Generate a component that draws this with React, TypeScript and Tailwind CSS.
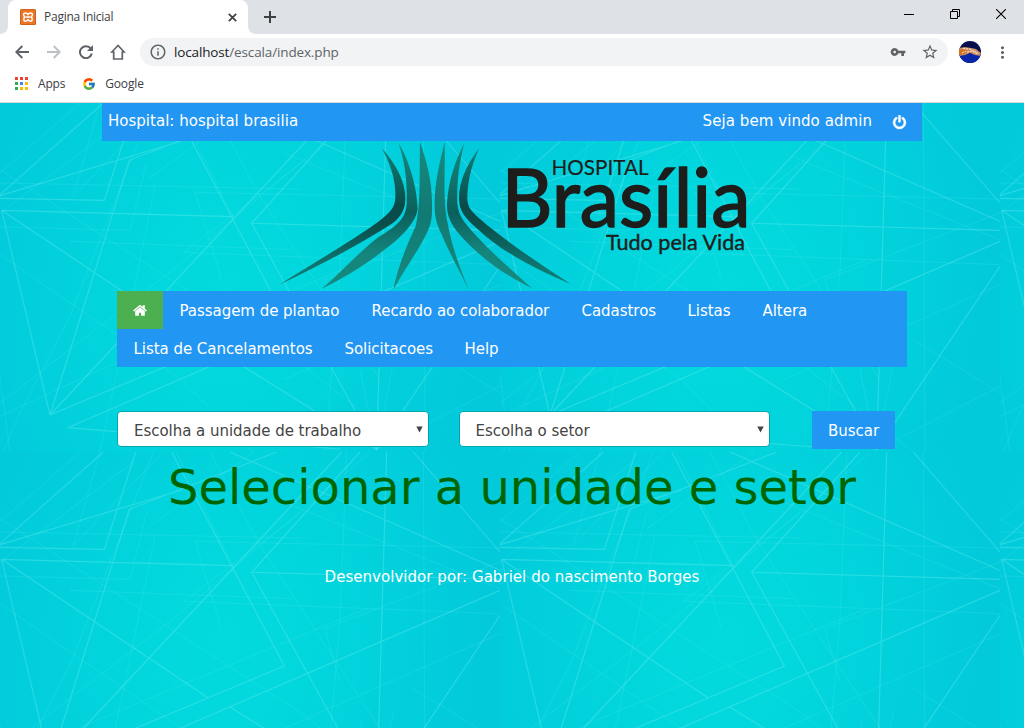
import React from "react";
import { MdInfoOutline, MdVpnKey, MdStarBorder, MdMoreVert } from "react-icons/md";
import { FcGoogle } from "react-icons/fc";

const strongLines = [
  "M310 0L0 275",
  "M407 0L313 292L0 286",
  "M830 0L388 172L150 936",
  "M515 0L853 642L150 936",
  "M1500 415L203 974L350 986L1020 1038",
  "M5 322L700 341",
  "M150 936L5 322L625 738",
  "M1025 0L150 936",
  "M1080 0L755 361L1500 382",
  "M755 361L1130 1040L1500 490",
  "M690 0L1500 355",
  "M1240 0L1500 300",
  "M1160 0L1130 1040L690 765",
  "M545 114L0 278",
];

const faintLines = [
  "M0 240L900 258",
  "M665 530L585 268L1500 288",
  "M550 448L880 200L1110 0",
  "M550 448L1500 485",
  "M210 415L880 440",
  "M0 372L390 382L440 180",
  "M0 455L540 826L760 1047",
  "M0 200L900 780L1240 1047",
  "M630 0L780 280L1140 830",
  "M528 0L700 341",
  "M460 0L210 640L60 930L10 1047",
  "M490 0L220 280L300 0",
  "M465 250L390 620L300 1047",
  "M1270 0L1275 1047",
  "M1040 0L1020 500L975 1047",
  "M1020 690L975 530L1500 330",
  "M1500 545L850 830",
  "M1100 470L300 800L0 940",
  "M0 210L240 0",
  "M400 30L0 330",
  "M850 150L1500 410",
  "M760 0L440 230",
  "M0 820L30 1047",
  "M1130 1040L1180 780",
  "M1130 1040L1500 850",
  "M1130 1040L1080 800",
  "M1500 870L1240 710",
  "M0 900L520 500L900 180",
];

function Backdrop() {
  return (
    <svg className="absolute inset-0 h-full w-full" aria-hidden="true">
      <defs>
        <radialGradient id="glow" gradientUnits="userSpaceOnUse" cx="0" cy="0" r="1" gradientTransform="translate(225 190) rotate(10) scale(255 340)">
          <stop offset="0" stopColor="#02dadd" />
          <stop offset="0.3" stopColor="#02d7dd" />
          <stop offset="0.7" stopColor="#02d0dc" />
          <stop offset="1" stopColor="#02cadb" />
        </radialGradient>
        <pattern id="mesh" width="500" height="349" patternUnits="userSpaceOnUse">
          <rect width="500" height="349" fill="url(#glow)" />
          <g transform="scale(0.33333)" fill="none" stroke="#7ff3f3">
            <path d={strongLines.join("")} strokeWidth="3.4" strokeOpacity="0.3" />
            <path d={faintLines.join("")} strokeWidth="3" strokeOpacity="0.12" />
          </g>
        </pattern>
      </defs>
      <rect width="100%" height="100%" fill="url(#mesh)" />
    </svg>
  );
}

function Logo() {
  return (
    <svg className="block h-[150px] w-full overflow-visible" viewBox="102 141 820 150" role="img" aria-label="Hospital Brasília">
      <defs>
        <linearGradient id="outer" x1="0" y1="0" x2="0" y2="1">
          <stop offset="0" stopColor="#128078" />
          <stop offset="0.42" stopColor="#0a4b49" />
          <stop offset="0.55" stopColor="#0a4d4a" />
          <stop offset="0.8" stopColor="#0d6f69" />
          <stop offset="1" stopColor="#128078" />
        </linearGradient>
        <linearGradient id="middle" x1="0" y1="0" x2="0" y2="1">
          <stop offset="0" stopColor="#158a80" />
          <stop offset="0.48" stopColor="#0b5f5b" />
          <stop offset="0.75" stopColor="#14857c" />
          <stop offset="1" stopColor="#158a80" />
        </linearGradient>
        <linearGradient id="inner" x1="0" y1="0" x2="0" y2="1">
          <stop offset="0" stopColor="#168a80" />
          <stop offset="0.5" stopColor="#117a73" />
          <stop offset="1" stopColor="#178b81" />
        </linearGradient>
      </defs>
      <g transform="translate(270 138) scale(0.33333)">
        <path fill="url(#outer)" d="M335 30C375 75 408 130 406 185C405 222 385 246 355 264C260 324 145 385 28 440C130 375 235 316 325 251C360 224 375 210 376 178C378 125 362 80 335 30Z" />
        <path fill="url(#middle)" d="M385 15C415 60 441 145 443 212C441 240 415 274 382 304C322 356 240 412 155 452C215 402 260 348 325 298C385 261 408 240 410 195C412 130 405 70 385 15Z" />
        <path fill="url(#inner)" d="M450 12C470 70 487 130 486 205C487 250 480 270 460 305C430 360 400 400 370 455C385 380 412 320 437 265C453 200 448 100 450 12Z" />
        <path fill="url(#inner)" d="M524 12C526 100 518 195 533 255C546 330 572 395 596 455C570 400 545 360 513 285C495 250 493 220 494 190C495 130 510 70 524 12Z" />
        <path fill="url(#middle)" d="M583 15C566 80 560 140 562 195C565 240 590 260 620 295C670 350 730 400 785 450C700 410 620 350 565 285C540 255 530 230 531 195C535 130 555 70 583 15Z" />
        <path fill="url(#outer)" d="M628 30C600 90 592 140 592 185C595 218 615 228 650 260C730 325 820 385 902 438C800 395 700 345 625 275C585 240 567 220 567 180C567 130 590 80 628 30Z" />
      </g>
      <g fill="#1d1d1b" stroke="#1d1d1b" fontFamily="Lato, 'Noto Sans', sans-serif">
        <text x="551.500" y="174.500" fontSize="21.500" strokeWidth="0.200" textLength="97" lengthAdjust="spacingAndGlyphs">HOSPITAL</text>
        <text x="501.500" y="227" fontSize="82" strokeWidth="1.600" textLength="249" lengthAdjust="spacingAndGlyphs">Brasília</text>
        <text x="606" y="250" fontSize="21.500" strokeWidth="0.400" textLength="139" lengthAdjust="spacingAndGlyphs">Tudo pela Vida</text>
      </g>
    </svg>
  );
}

function TabStrip() {
  return (
    <div className="flex h-[34px] bg-[#dee1e6]">
      <div className="flex w-2 bg-white">
        <div className="w-2 rounded-br-lg bg-[#dee1e6]" />
      </div>
      <div className="flex w-60 items-center rounded-t-lg bg-white pl-3 pr-[10px]">
        <svg className="h-4 w-4" viewBox="0 0 16 16">
          <rect width="16" height="16" rx="1.5" fill="#ec7625" />
          <rect x=".5" y=".5" width="15" height="15" rx="1" fill="none" stroke="#d0611a" />
          <path d="M8 5.500C6.500 3.200 3.500 3.500 3.500 5.500C3.500 7 4.500 7.500 5 8C3.500 8.500 3.200 12 5.200 12.300C7 12.500 7.500 11 8 10.500C8.500 11 9 12.500 10.800 12.300C12.800 12 12.500 8.500 11 8C11.500 7.500 12.500 7 12.500 5.500C12.500 3.500 9.500 3.200 8 5.500ZM6 8h4" fill="none" stroke="#fff" strokeWidth="1.500" />
        </svg>
        <span className="ml-2 flex-1 font-['Open_Sans',sans-serif] text-[12px] tracking-[-0.25px] text-[#3c4043]">Pagina Inicial</span>
        <svg className="mr-[1px] h-[9px] w-[9px]" viewBox="0 0 9 9"><path d="M.8.800l7.400 7.400M8.200.8L.8 8.200" stroke="#3c4043" strokeWidth="1.700" /></svg>
      </div>
      <div className="flex w-2 bg-white">
        <div className="w-2 rounded-bl-lg bg-[#dee1e6]" />
      </div>
      <svg className="ml-2 mt-[11px] h-3 w-3" viewBox="0 0 12 12"><path d="M6 0v12M0 6h12" stroke="#3c4043" strokeWidth="2" /></svg>
      <div className="ml-auto flex items-start gap-9 pr-[18px] pt-[9px]">
        <svg className="h-[11px] w-[10px]" viewBox="0 0 10 11"><path d="M0 5.500h10" stroke="#000" /></svg>
        <svg className="h-[10px] w-[10px]" viewBox="0 0 10 10"><path d="M.5 2.500h7v7h-7zM2.500 2.500v-2h7v7h-2" fill="none" stroke="#000" /></svg>
        <svg className="h-[10px] w-[10px]" viewBox="0 0 10 10"><path d="M0 0l10 10M10 0L0 10" stroke="#000" strokeWidth="1.100" /></svg>
      </div>
    </div>
  );
}

function Toolbar() {
  return (
    <div className="flex h-9 items-center bg-white pl-[15px] pr-[11px] text-[#5f6368]">
      <svg className="h-[14px] w-[14px]" viewBox="0 0 14 14"><path d="M14 7H1.500M7.300 1L1.300 7l6 6" fill="none" stroke="currentColor" strokeWidth="1.900" /></svg>
      <svg className="ml-[18px] h-[14px] w-[14px] text-[#bdc1c6]" viewBox="0 0 14 14"><path d="M0 7h12.500M6.700 1l6 6-6 6" fill="none" stroke="currentColor" strokeWidth="1.900" /></svg>
      <svg className="ml-[18px] h-[14px] w-[14px]" viewBox="0 0 14 14">
        <path d="M11.800 3.600A6 6 0 1 0 12.800 8.600" fill="none" stroke="currentColor" strokeWidth="2" />
        <path d="M14 0v6H8z" fill="currentColor" />
      </svg>
      <svg className="ml-[17px] h-4 w-4" viewBox="0 0 16 16"><path d="M8 1.500L1.800 8H3.700V15h8.600V8h1.900z" fill="none" stroke="#5f6368" strokeWidth="1.700" /></svg>
      <div className="ml-[14px] flex h-7 w-[808px] items-center rounded-full bg-[#f1f3f4] pl-[9px] pr-[9px]">
        <MdInfoOutline size={18} />
        <span className="ml-[7px] flex-1 font-['Open_Sans',sans-serif] text-[13.500px] tracking-[-0.140px]"><span className="text-[#202124]">localhost</span>/escala/index.php</span>
        <MdVpnKey size={16} />
        <MdStarBorder size={18} className="ml-[15px]" />
      </div>
      <svg className="ml-[11px] h-[22px] w-[22px]" viewBox="0 0 22 22">
        <defs><clipPath id="disc"><circle cx="11" cy="11" r="11" /></clipPath></defs>
        <g clipPath="url(#disc)">
          <path d="M0 0h22v22H0z" fill="#07104a" />
          <path d="M0 13h22v9H0z" fill="#0826a8" />
          <path d="M0 7l6-1 6 1 5 1 5 4v3l-6-1-5-2-5 2-6 1z" fill="#c98d68" />
          <path d="M0 9l5-1 4 2-4 3-5 1z" fill="#d0701c" />
          <path d="M4 7.500l7 .5 8 4M8 11l5-1 6 3M3 12l4-2" stroke="#f7dcc0" strokeWidth="1.100" strokeDasharray="2 1" fill="none" />
        </g>
      </svg>
      <MdMoreVert size={19} className="ml-3 shrink-0" />
    </div>
  );
}

const appDots = ["bg-[#ea4335]", "bg-[#ea4335]", "bg-[#ea4335]", "bg-[#34a853]", "bg-[#4285f4]", "bg-[#fbbc05]", "bg-[#34a853]", "bg-[#fbbc05]", "bg-[#fbbc05]"];

function Bookmarks() {
  return (
    <div className="flex h-[33px] items-center border-b border-[#d9d9d9] bg-white pb-[5px] pl-[15px] font-['Open_Sans',sans-serif] text-[12px] text-[#3c4043]">
      <div className="grid grid-cols-3 gap-[2px]">
        {appDots.map((c, i) => <span key={i} className={"h-[3px] w-[3px] " + c} />)}
      </div>
      <span className="ml-[10px] tracking-[-0.200px]">Apps</span>
      <FcGoogle size={14} className="ml-[17px]" />
      <span className="ml-[9px] tracking-[-0.150px]">Google</span>
    </div>
  );
}

const firstRow = [
  { label: "Passagem de plantao", width: "w-[192px]" },
  { label: "Recardo ao colaborador", width: "w-[210px]" },
  { label: "Cadastros", width: "w-[106px]" },
  { label: "Listas", width: "w-[75px]" },
  { label: "Altera", width: "w-[76px]" },
];
const secondRow = [
  { label: "Lista de Cancelamentos", width: "w-[211px]" },
  { label: "Solicitacoes", width: "w-[120px]" },
  { label: "Help", width: "w-[66px]" },
];

function NavItem({ label, width }: { label: string; width: string }) {
  return <a className={"whitespace-nowrap pl-[16.500px] pt-[2px] tracking-[-0.040px] " + width}>{label}</a>;
}

function SelectBox({ label }: { label: string }) {
  return (
    <div className="flex h-[36px] w-[311.500px] items-center justify-between rounded-[4px] border border-[#00a5b2] bg-white pl-4 pr-[5px] text-[#444]">
      <span className="pt-[3px] tracking-[-0.030px]">{label}</span>
      <svg className="h-[7px] w-[7px]" viewBox="0 0 7 7"><path d="M.3.500h6.400L3.500 6.500z" fill="#444" /></svg>
    </div>
  );
}

export default function App() {
  return (
    <div className="flex h-[728px] w-[1024px] flex-col overflow-hidden">
      <TabStrip />
      <Toolbar />
      <Bookmarks />
      <div className="relative flex-1 overflow-hidden font-['DejaVu_Sans',Verdana,sans-serif] text-[15px] leading-[22px] text-white">
        <Backdrop />
        <main className="relative mx-auto w-[820px]">
          <header className="flex h-[38px] items-center bg-[#2196f3] pl-[6px] pr-[15px]">
            <span className="pb-[3px] tracking-[0.020px]">Hospital: hospital brasilia</span>
            <span className="ml-auto pb-[3px] tracking-[0.070px]">Seja bem vindo admin</span>
            <svg className="ml-5 h-[15px] w-[15px]" viewBox="64 0 1664 1792">
              <path fill="#fff" stroke="#fff" strokeWidth="50" d="M1664 896q0 156-61 298t-164 245-245 164-298 61-298-61-245-164-164-245-61-298q0-182 80.500-343t226.500-270q43-32 95.500-25t83.500 50q32 42 24.500 94.500t-49.500 84.500q-98 74-151.500 181t-53.500 228q0 104 40.500 198.500t109.500 163.500 163.500 109.500 198.500 40.500 198.500-40.500 163.500-109.500 109.500-163.500 40.500-198.500q0-121-53.500-228t-151.500-181q-42-32-49.500-84.500t24.500-94.500q31-43 84-50t95 25q146 109 226.500 270t80.500 343zm-640-768v640q0 52-38 90t-90 38-90-38-38-90v-640q0-52 38-90t90-38 90 38 38 90z" />
            </svg>
          </header>
          <Logo />
          <nav className="mx-[15px] h-[76px] bg-[#2196f3]">
            <div className="flex h-[38px] items-center">
              <a className="flex h-[38px] w-[46px] items-center justify-center bg-[#4caf50]">
                <svg className="h-[15px] w-[14px]" viewBox="0 0 1664 1792">
                  <path fill="#fff" d="M1408 992v480q0 26-19 45t-45 19h-384v-384h-256v384h-384q-26 0-45-19t-19-45v-480q0-1 .5-3t.5-3l575-474 575 474q1 2 1 6zm223-69l-62 74q-8 9-21 11h-3q-13 0-21-7l-692-577-692 577q-12 8-24 7-13-2-21-11l-62-74q-8-10-7-23.500t11-21.500l719-599q32-26 76-26t76 26l244 204v-195q0-14 9-23t23-9h192q14 0 23 9t9 23v408l219 182q10 8 11 21.500t-7 23.500z" />
                </svg>
              </a>
              {firstRow.map((item) => <NavItem key={item.label} {...item} />)}
            </div>
            <div className="flex h-[38px] items-center">
              {secondRow.map((item) => <NavItem key={item.label} {...item} />)}
            </div>
          </nav>
          <form className="mt-11 flex items-start pl-[15px]">
            <SelectBox label="Escolha a unidade de trabalho" />
            <div className="ml-[30px]"><SelectBox label="Escolha o setor" /></div>
            <button type="button" className="ml-[42px] h-[38px] w-[83px] bg-[#2196f3] pt-[2px]">Buscar</button>
          </form>
          <h1 className="mt-[3px] whitespace-nowrap text-center text-[48px] leading-[70px] text-[#006400]">Selecionar a unidade e setor</h1>
          <footer className="mt-11 text-center tracking-[0.040px]">Desenvolvidor por: Gabriel do nascimento Borges</footer>
        </main>
      </div>
    </div>
  );
}
